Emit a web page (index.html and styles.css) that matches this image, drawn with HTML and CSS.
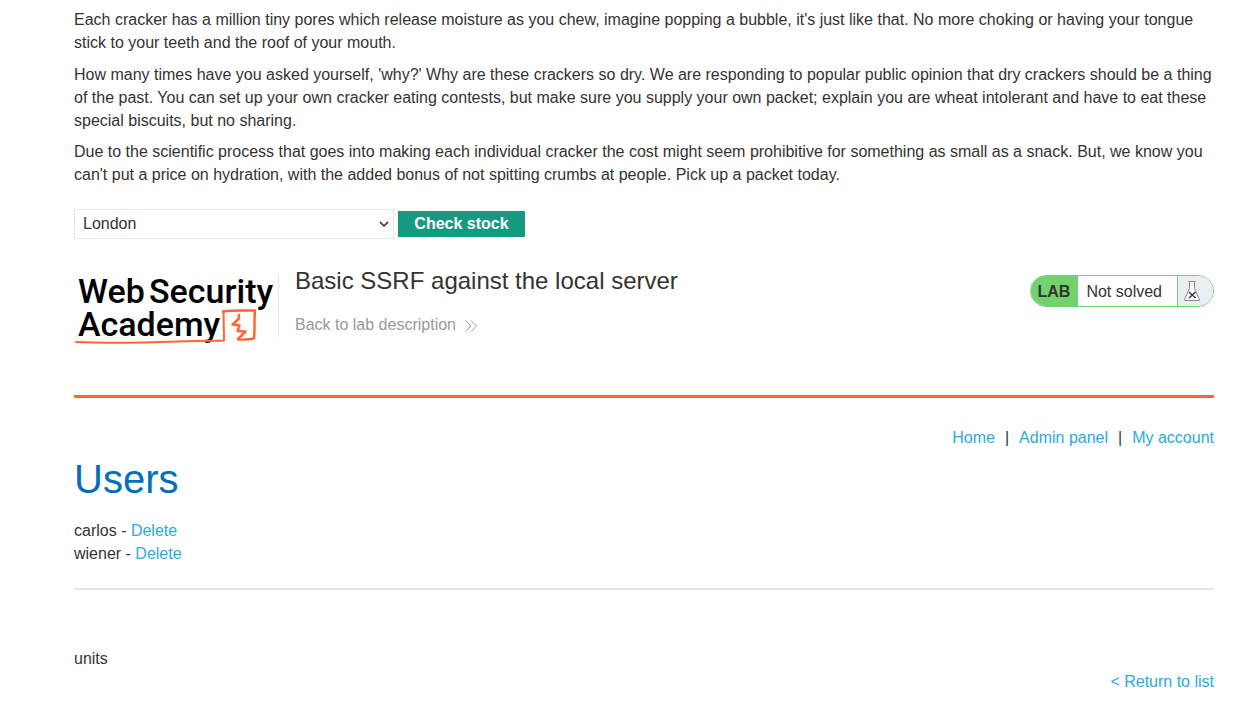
FILE: index.html
```html
<!DOCTYPE html>
<html lang="en">
<head>
<meta charset="utf-8">
<title>Basic SSRF against the local server</title>
<link rel="stylesheet" href="styles.css">
</head>
<body>
<main class="page">
  <section class="description">
    <p>Each cracker has a million tiny pores which release moisture as you chew, imagine popping a bubble, it's just like that. No more choking or having your tongue stick to your teeth and the roof of your mouth.</p>
    <p>How many times have you asked yourself, 'why?' Why are these crackers so dry. We are responding to popular public opinion that dry crackers should be a thing of the past. You can set up your own cracker eating contests, but make sure you supply your own packet; explain you are wheat intolerant and have to eat these special biscuits, but no sharing.</p>
    <p>Due to the scientific process that goes into making each individual cracker the cost might seem prohibitive for something as small as a snack. But, we know you can't put a price on hydration, with the added bonus of not spitting crumbs at people. Pick up a packet today.</p>
  </section>

  <form class="stock" onsubmit="return false">
    <div class="select-wrap">
      <select class="select" name="store" aria-label="Store">
        <option>London</option>
        <option>Paris</option>
        <option>Milan</option>
      </select>
      <svg class="chevron" width="10" height="7" viewBox="0 0 10 7" aria-hidden="true"><path d="M1 1 5 5 9 1" fill="none" stroke="#222" stroke-width="1.500"/></svg>
    </div>
    <button class="button" type="submit">Check stock</button>
  </form>

  <header class="lab-header">
    <svg class="logo" width="204" height="82" viewBox="0 0 204 82" role="img" aria-label="Web Security Academy">
      <g class="logo-text">
        <text x="4" y="39">Web</text>
        <text x="75" y="39">Security</text>
        <text x="4" y="72">Academy</text>
      </g>
      <g fill="none" stroke="#ff6633" stroke-linejoin="round" stroke-linecap="round">
        <path d="M2 78C35 79.500 75 78.500 105 77.500S140 77 150 76.500L149.500 47" stroke-width="2"/>
        <path d="M149 47.500C160 46 172 46.500 181 46.500C180 56 181 65 180 74.500Q173 76 164 75.500" stroke-width="2.500"/>
        <path d="M165 51 164.500 55 158.500 60.500 165.500 61.500 163.500 67 171.500 67.500 164 75" stroke-width="2.500"/>
      </g>
    </svg>
    <div class="divider"></div>
    <div class="title-block">
      <h2 class="title">Basic SSRF against the local server</h2>
      <a class="back" href="#">Back to lab description
        <svg width="12" height="12" viewBox="0 0 12 12" aria-hidden="true"><path d="M.5.5 6 6 .5 11.500M6 .5 11.500 6 6 11.500" fill="none" stroke="#999" stroke-width="1"/></svg>
      </a>
    </div>
    <div class="status">
      <span class="status-lab">LAB</span>
      <span class="status-text">Not solved</span>
      <span class="status-icon">
        <svg width="16" height="20" viewBox="0 0 16 20" aria-hidden="true">
          <path d="M5.500.5v7L.7 19.500h14.600L10.500 7.500v-7z" fill="#fff"/>
          <path d="M4.500.5h7M5.500.5v7L.7 18v1.500h14.600V18L10.500 7.500v-7" fill="none" stroke="#888"/>
          <path d="m5 11 6.500 6M11.500 11 5 17" stroke="#333" stroke-width="1.400"/>
        </svg>
      </span>
    </div>
  </header>

  <nav class="nav">
    <a href="#">Home</a><span>|</span><a href="#">Admin panel</a><span>|</span><a href="#">My account</a>
  </nav>

  <section class="users">
    <h1 class="heading">Users</h1>
    <div>carlos - <a href="#">Delete</a></div>
    <div>wiener - <a href="#">Delete</a></div>
  </section>
  <hr class="rule">
  <div class="units">units</div>
  <div class="return"><a href="#">&lt; Return to list</a></div>
</main>
</body>
</html>
```
FILE: styles.css
```css
* { box-sizing: border-box; }

body {
  margin: 0;
  background: #fff;
  color: #333332;
  font-family: "Liberation Sans", Arial, sans-serif;
  font-size: 16px;
  line-height: 1.43;
}

a { color: #29abe2; text-decoration: none; }

.page { padding: 9px 36px 24px 74px; }

.description p { margin: 0 0 9px; }

.stock {
  display: flex;
  align-items: center;
  gap: 4px;
  margin-top: 22px;
}

.select-wrap { position: relative; width: 320px; }

.select {
  display: block;
  appearance: none;
  width: 100%;
  height: 30px;
  padding: 0 8px;
  border: 1px solid #e5e5e5;
  border-radius: 0;
  background: #fff;
  color: inherit;
  font: inherit;
}

.chevron {
  position: absolute;
  top: 12px;
  right: 5px;
  pointer-events: none;
}

.button {
  width: 127px;
  height: 26px;
  padding: 0;
  border: 0;
  background: #159a80;
  color: #fff;
  font: inherit;
  font-weight: bold;
}

.lab-header {
  display: flex;
  align-items: flex-start;
  margin-top: 25px;
  padding-bottom: 49px;
  border-bottom: 3px solid #ff6633;
}

.logo { flex: none; }

.logo-text {
  fill: #000;
  font-family: Roboto, sans-serif;
  font-size: 34px;
  font-weight: 500;
}

.divider {
  width: 1px;
  height: 62px;
  margin-top: 11px;
  background: #e5e5e5;
}

.title-block { flex: 1; padding-left: 16px; }

.title {
  margin: 0 0 16px;
  font-size: 24px;
  font-weight: normal;
}

.back {
  display: inline-flex;
  align-items: center;
  gap: 9px;
  color: #999;
}

.status {
  display: flex;
  height: 32px;
  margin-top: 11px;
  border: 1px solid #72d26e;
  border-radius: 16px;
  overflow: hidden;
  line-height: 31px;
}

.status-lab {
  padding: 0 8px 0 7px;
  background: #72d26e;
  font-weight: bold;
}

.status-text { padding: 0 15px 0 8px; }

.status-icon {
  display: flex;
  align-items: center;
  width: 36px;
  padding-left: 6px;
  border-left: 1px solid #72d26e;
  background: #eaeff2;
}

.nav {
  display: flex;
  justify-content: flex-end;
  gap: 10px;
  margin: 29px 0 1px;
}

.heading {
  margin: 0 0 12px;
  color: #0070bb;
  font-size: 40px;
  font-weight: normal;
}

.users { margin-bottom: 22px; }

.rule {
  height: 2px;
  margin: 0 0 58px;
  border: 0;
  background: #e5e5e5;
}

.return { text-align: right; }
```
